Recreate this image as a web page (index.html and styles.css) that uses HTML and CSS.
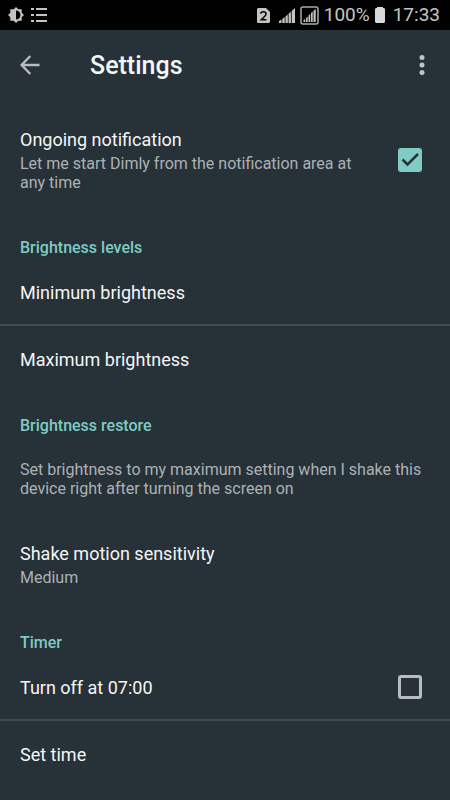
FILE: index.html
```html
<!DOCTYPE html>
<html lang="en">
<head>
<meta charset="utf-8">
<meta name="viewport" content="width=device-width, initial-scale=1">
<title>Settings</title>
<link rel="stylesheet" href="styles.css">
</head>
<body>
<div class="status-bar">
  <div class="status-left">
    <svg width="16" height="16" viewBox="0 0 16 16" aria-hidden="true"><path fill="#c4c4c4" fill-rule="evenodd" d="M8 0l2.300 2.300h3.400v3.400L16 8l-2.300 2.300v3.400h-3.400L8 16l-2.300-2.300H2.300v-3.400L0 8l2.300-2.300V2.300h3.400zM8 3.500v9a4.500 4.500 0 0 0 0-9z"/></svg>
    <svg width="16" height="16" viewBox="0 0 16 16" aria-hidden="true"><path fill="#c4c4c4" d="M0 1h3v2H0zM5 1h11v2H5zM0 7h3v2H0zM5 7h11v2H5zM0 13h3v2H0zM5 13h11v2H5z"/></svg>
  </div>
  <div class="status-right">
    <svg width="13" height="15" viewBox="0 0 13 15" aria-hidden="true"><path fill="#c4c4c4" d="M1 0h8l4 4v10l-1 1H1l-1-1V1z"/><path fill="none" stroke="#000" stroke-width="1.500" d="M3.700 5.800Q3.900 3.700 6.400 3.700T9 5.700Q9 7.200 7.500 8.500L4.300 11.700H9.400"/></svg>
    <svg class="signal" width="16" height="15" viewBox="0 0 16 15" aria-hidden="true"><path fill="#c4c4c4" d="M0 13l2.500-1.500V15H0zM3.300 11l2.400-2v6H3.300zM6.500 8.500l2.300-2V15H6.500zM9.600 5.800l2.300-2V15H9.600zM12.700 3L16 0v15h-3.300z"/></svg>
    <svg width="19" height="19" viewBox="0 0 19 19" aria-hidden="true"><rect x="1" y="1" width="17" height="17" rx="2" fill="none" stroke="#aaa" stroke-width="1.500"/><path fill="#c4c4c4" d="M3.500 14l1.700-1v3H3.500zM6 12l1.700-1.500V16H6zM8.500 9.500L10.200 8v8H8.500zM11 7l1.700-1.500V16H11zM13.500 4.700L15.700 3v13h-2.200z"/></svg>
    <span>100%</span>
    <svg width="10" height="16" viewBox="0 0 10 16" aria-hidden="true"><path fill="#d8d8d8" d="M2 0h6v1h1l1 1v13l-1 1H1l-1-1V2l1-1h1z"/></svg>
    <time class="clock">17:33</time>
  </div>
</div>
<header class="toolbar">
  <button class="icon-button" type="button" aria-label="Back">
    <svg width="20" height="20" viewBox="0 0 20 20"><path fill="none" stroke="#b9bcbe" stroke-width="2.400" d="M19.500 10H2M10.300 1L1.600 10l8.700 9"/></svg>
  </button>
  <h1>Settings</h1>
  <button class="icon-button" type="button" aria-label="More options">
    <svg width="6" height="20" viewBox="0 0 6 20"><g fill="#c2c5c7"><circle cx="3" cy="2.500" r="2.500"/><circle cx="3" cy="10" r="2.500"/><circle cx="3" cy="17.500" r="2.500"/></g></svg>
  </button>
</header>
<main>
  <label class="item item-tall">
    <span class="item-text">
      <span class="title">Ongoing notification</span>
      <span class="summary">Let me start Dimly from the notification area at any time</span>
    </span>
    <input class="check" type="checkbox" checked>
  </label>
  <section>
    <h2>Brightness levels</h2>
    <div class="item divided"><span class="title">Minimum brightness</span></div>
    <div class="item"><span class="title">Maximum brightness</span></div>
  </section>
  <section class="spaced">
    <h2>Brightness restore</h2>
    <div class="item item-note"><p class="summary">Set brightness to my maximum setting when I shake this device right after turning the screen on</p></div>
    <div class="item item-tall">
      <span class="item-text">
        <span class="title">Shake motion sensitivity</span>
        <span class="summary">Medium</span>
      </span>
    </div>
  </section>
  <section>
    <h2>Timer</h2>
    <label class="item divided"><span class="title">Turn off at 07:00</span><input class="check" type="checkbox"></label>
    <div class="item"><span class="title">Set time</span></div>
  </section>
</main>
</body>
</html>
```
FILE: styles.css
```css
* {
  box-sizing: border-box;
}

body {
  margin: 0;
  background: #263138;
  color: #f5f6f6;
  font-family: Roboto, "Liberation Sans", sans-serif;
}

.status-bar {
  display: flex;
  align-items: center;
  justify-content: space-between;
  height: 30px;
  padding: 0 10px 0 8px;
  background: #000;
  color: #c4c4c4;
  font-size: 19px;
  line-height: 32px;
}

.status-left,
.status-right {
  display: flex;
  align-items: center;
}

.status-left {
  gap: 7px;
}

.status-right {
  gap: 5px;
}

.signal {
  margin-left: 4px;
}

.clock {
  margin-left: 3px;
}

.toolbar {
  display: flex;
  align-items: center;
  height: 70px;
  padding: 0 20px;
}

.icon-button {
  display: flex;
  padding: 0 5px 0 0;
  border: 0;
  background: none;
}

h1 {
  flex: 1;
  margin: 0 0 0 45px;
  padding-top: 2px;
  font-size: 25px;
  font-weight: 500;
  line-height: 30px;
}

.item {
  display: flex;
  align-items: center;
  justify-content: space-between;
  min-height: 66px;
  padding: 0 28px 0 20px;
}

.item-tall {
  padding-top: 28px;
  padding-bottom: 43px;
}

.item-note {
  min-height: 0;
  padding-top: 22px;
  padding-bottom: 16px;
}

.divided {
  border-bottom: 2px solid #414b51;
}

.item-text {
  display: flex;
  flex-direction: column;
  gap: 2px;
  max-width: 350px;
}

.title {
  font-size: 18px;
  line-height: 24px;
}

.item > .title {
  padding-top: 2px;
}

.summary {
  margin: 0;
  color: #adb1b4;
  font-size: 16px;
  line-height: 19px;
}

h2 {
  margin: 0;
  padding: 1px 20px 0;
  color: #80cbc4;
  font-size: 16px;
  font-weight: 500;
  line-height: 24px;
}

.spaced {
  padding-top: 21px;
}

.check {
  flex: none;
  width: 24px;
  height: 24px;
  margin: 0;
  appearance: none;
  border: 3px solid #b9bcbe;
  border-radius: 3px;
}

.check:checked {
  border: 0;
  background: #80cbc4 url("data:image/svg+xml,%3Csvg xmlns='http://www.w3.org/2000/svg' viewBox='0 0 24 24'%3E%3Cpath d='M4.500 11.500l5 5L20 6' fill='none' stroke='%23263138' stroke-width='2.500'/%3E%3C/svg%3E") center / contain no-repeat;
}
```
